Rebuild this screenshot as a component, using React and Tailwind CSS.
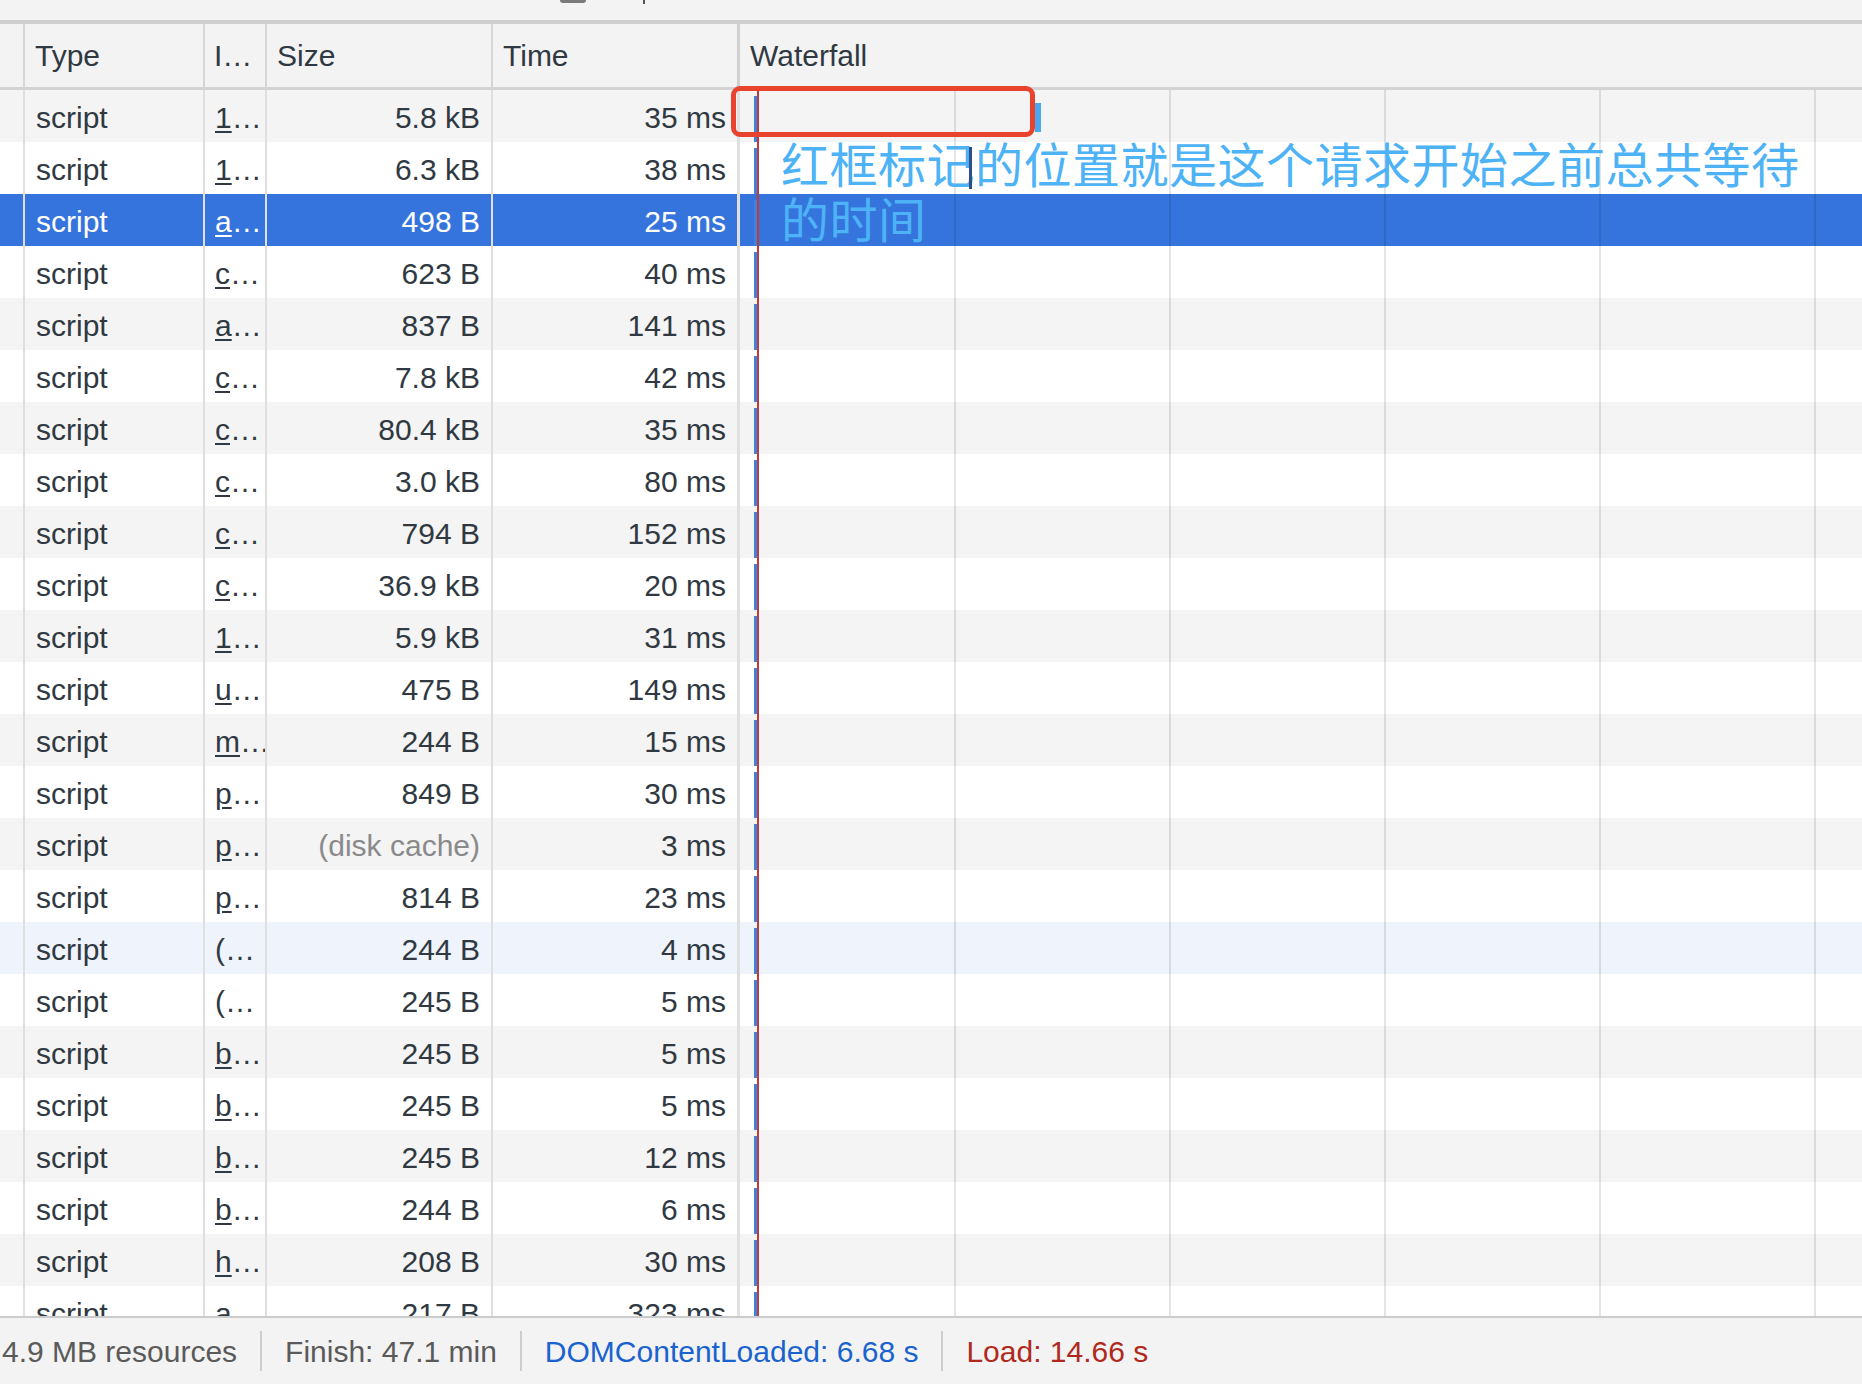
const rows = [
  ["1", "5.8 kB", "35 ms"],
  ["1", "6.3 kB", "38 ms"],
  ["a", "498 B", "25 ms"],
  ["c", "623 B", "40 ms"],
  ["a", "837 B", "141 ms"],
  ["c", "7.8 kB", "42 ms"],
  ["c", "80.4 kB", "35 ms"],
  ["c", "3.0 kB", "80 ms"],
  ["c", "794 B", "152 ms"],
  ["c", "36.9 kB", "20 ms"],
  ["1", "5.9 kB", "31 ms"],
  ["u", "475 B", "149 ms"],
  ["m", "244 B", "15 ms"],
  ["p", "849 B", "30 ms"],
  ["p", "(disk cache)", "3 ms"],
  ["p", "814 B", "23 ms"],
  ["(", "244 B", "4 ms"],
  ["(", "245 B", "5 ms"],
  ["b", "245 B", "5 ms"],
  ["b", "245 B", "5 ms"],
  ["b", "245 B", "12 ms"],
  ["b", "244 B", "6 ms"],
  ["h", "208 B", "30 ms"],
  ["a", "217 B", "323 ms"],
];

function Row({ i, init, size, time }) {
  const selected = i === 2;
  const hover = i === 16;
  const bg = selected
    ? "bg-[#3574dc] text-white"
    : hover
    ? "bg-[#eef3fc]"
    : i % 2 === 0
    ? "bg-[#f4f4f4]"
    : "bg-white";
  const cell = "h-full flex items-center pt-[2px] border-l-2 border-[#dfdfdf] whitespace-nowrap overflow-hidden";
  return (
    <div className={`h-[52px] shrink-0 flex ${bg}`}>
      <div className="w-[23px] shrink-0" />
      <div className={`w-[180px] shrink-0 pl-[11px] ${cell}`}>script</div>
      <div className={`w-[62px] shrink-0 pl-[10px] ${cell}`}>
        {init === "(" ? (
          <span>(</span>
        ) : (
          <span className="underline decoration-2 underline-offset-[3px]">{init}</span>
        )}
        <span>…</span>
      </div>
      <div
        className={`w-[226px] shrink-0 pr-[11px] justify-end ${cell} ${
          size === "(disk cache)" ? "text-[#8a8a8a]" : ""
        }`}
      >
        {size}
      </div>
      <div className={`w-[246px] shrink-0 pr-[11px] justify-end ${cell}`}>{time}</div>
      <div className="w-[3px] shrink-0 bg-[#e0e0e0]" />
      <div className="flex-1 flex items-stretch">
        <div className="ml-[14px] w-[3px] mt-[6px] bg-[#3d82dc]" />
        {i === 0 && (
          <div className="ml-[278px] mt-[13px] w-[6px] h-[29px] bg-[#4aa8f0]" />
        )}
      </div>
    </div>
  );
}

function FooterDivider() {
  return <div className="mx-[23px] w-[2px] h-[40px] bg-[#cdcdcd] shrink-0" />;
}

export default function App() {
  return (
    <div className="w-[1862px] h-[1384px] overflow-hidden flex flex-col bg-white text-[#303942] text-[30px] font-['Liberation_Sans',Arial,sans-serif]">
      {/* top cut-off toolbar */}
      <div className="h-[24px] shrink-0 bg-[#f3f3f3] border-b-[4px] border-[#cfcfcf] flex items-start">
        <div className="ml-[560px] w-[26px] h-[3px] rounded-b-[3px] bg-[#7a7a7a]" />
        <div className="ml-[57px] w-[2px] h-[4px] bg-[#555]" />
      </div>

      <div className="relative flex-1 min-h-0 flex flex-col">
        {/* header */}
        <div className="h-[66px] shrink-0 flex bg-[#f3f3f3] border-b-[3px] border-[#d3d3d3]">
          <div className="w-[23px] shrink-0" />
          <div className="w-[180px] shrink-0 border-l-2 border-[#d6d6d6] pl-[10px] flex items-center">Type</div>
          <div className="w-[62px] shrink-0 border-l-2 border-[#d6d6d6] pl-[9px] flex items-center">I…</div>
          <div className="w-[226px] shrink-0 border-l-2 border-[#d6d6d6] pl-[10px] flex items-center">Size</div>
          <div className="w-[246px] shrink-0 border-l-2 border-[#d6d6d6] pl-[10px] flex items-center">Time</div>
          <div className="w-[3px] shrink-0 bg-[#d0d0d0]" />
          <div className="flex-1 pl-[10px] flex items-center">Waterfall</div>
        </div>

        {/* rows */}
        <div className="relative flex-1 min-h-0 overflow-hidden flex flex-col">
          {rows.map((r, i) => (
            <Row key={i} i={i} init={r[0]} size={r[1]} time={r[2]} />
          ))}
          {/* waterfall grid lines */}
          <div className="absolute top-0 bottom-0 left-[954px] w-[2px] bg-black/10" />
          <div className="absolute top-0 bottom-0 left-[1169px] w-[2px] bg-black/10" />
          <div className="absolute top-0 bottom-0 left-[1384px] w-[2px] bg-black/10" />
          <div className="absolute top-0 bottom-0 left-[1599px] w-[2px] bg-black/10" />
          <div className="absolute top-0 bottom-0 left-[1814px] w-[2px] bg-black/10" />
          {/* load line */}
          <div className="absolute top-0 bottom-0 left-[757px] w-[2px] bg-[#c23b36]" />
        </div>

        {/* annotation box */}
        <div className="absolute left-[731px] top-[62px] w-[304px] h-[51px] border-[5px] border-[#e8432d] rounded-[9px]" />
        <div className="absolute left-[781px] top-[111px] text-[48px] leading-[55px] tracking-[0.5px] text-[#4db2f6] font-['Noto_Sans_CJK_SC',sans-serif] whitespace-nowrap">
          <div>
            红框标记<span className="inline-block w-[3px] h-[42px] -ml-[6px] mr-[3px] align-[-6px] bg-[#2c4f8c]" />的位置就是这个请求开始之前总共等待
          </div>
          <div>的时间</div>
        </div>
      </div>

      {/* footer */}
      <div className="h-[68px] shrink-0 border-t-2 border-[#cbcbcb] bg-[#f3f3f3] flex items-center text-[#5a5a5a] whitespace-nowrap">
        <span className="pl-[2px]">4.9 MB resources</span>
        <FooterDivider />
        <span>Finish: 47.1 min</span>
        <FooterDivider />
        <span className="text-[#1a63cf]">DOMContentLoaded: 6.68 s</span>
        <FooterDivider />
        <span className="text-[#b0291d]">Load: 14.66 s</span>
      </div>
    </div>
  );
}
